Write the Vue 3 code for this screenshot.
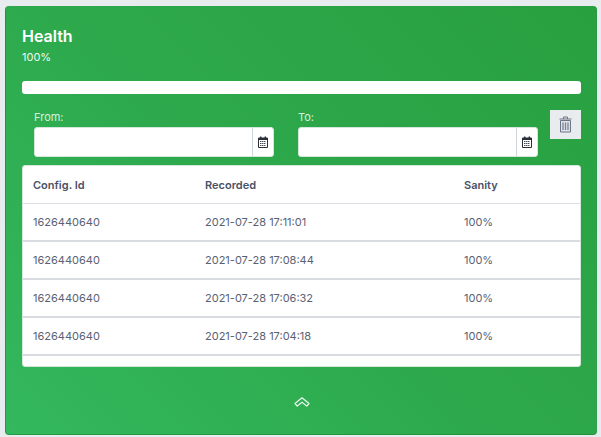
<script setup>
const rows = [
  { id: '1626440640', at: '2021-07-28 17:11:01', sanity: '100%' },
  { id: '1626440640', at: '2021-07-28 17:08:44', sanity: '100%' },
  { id: '1626440640', at: '2021-07-28 17:06:32', sanity: '100%' },
  { id: '1626440640', at: '2021-07-28 17:04:18', sanity: '100%' },
]
const fields = ['From:', 'To:']
</script>

<template>
  <div class="page">
    <section class="card">
      <h1 class="title">Health</h1>
      <div class="sub">100%</div>
      <div class="progress"></div>
      <div class="filters">
        <div v-for="f in fields" :key="f" class="field">
          <label class="label">{{ f }}</label>
          <div class="input">
            <div class="input-main"></div>
            <div class="input-addon">
              <svg width="10" height="12" viewBox="0 0 10 12">
                <path d="M0.5 2h9v9.5h-9z" fill="#fff" stroke="#2a2f3a" stroke-width="1" />
                <path d="M0.5 2h9v2h-9z" fill="#2a2f3a" />
                <path d="M2 0.5h1.4v2H2zM6.6 0.5H8v2H6.6z" fill="#2a2f3a" />
                <path d="M2 5.5h6M2 7.5h6M2 9.5h6" stroke="#4a4f5a" stroke-width="1" stroke-dasharray="1.5 .5" />
              </svg>
            </div>
          </div>
        </div>
        <button class="trash" type="button" aria-label="Delete">
          <svg width="13" height="17" viewBox="0 0 13 17">
            <path d="M0.5 3h12" stroke="#6c7587" stroke-width="1" />
            <path d="M4.5 3V1h4v2" fill="none" stroke="#6c7587" stroke-width="1" />
            <path d="M1.5 4.5h10v11.5h-10z" fill="#dfe2e8" stroke="#6c7587" stroke-width="1" />
            <path d="M4 6.5v7.5M6.5 6.5v7.5M9 6.5v7.5" stroke="#7b8496" stroke-width="1.3" />
          </svg>
        </button>
      </div>
      <div class="table-wrap">
        <div class="row head">
          <div>Config. Id</div>
          <div>Recorded</div>
          <div>Sanity</div>
        </div>
        <div v-for="r in rows" :key="r.at" class="row">
          <div>{{ r.id }}</div>
          <div>{{ r.at }}</div>
          <div>{{ r.sanity }}</div>
        </div>
      </div>
      <div class="collapse">
        <svg width="16" height="12" viewBox="0 0 16 12">
          <path d="M1 6.5L8 .8l7 5.7-2.2 2.6L8 5.2 3.2 9.1z" fill="none" stroke="#eafbef" stroke-width="1.2" stroke-linejoin="round" />
        </svg>
      </div>
    </section>
  </div>
</template>

<style>
html, body { margin: 0; background: #e9ecef; }
</style>

<style scoped>
.page {
  width: 601px;
  height: 437px;
  box-sizing: border-box;
  padding: 6px 4px 2px 5px;
  font-family: Inter, "Liberation Sans", sans-serif;
  overflow: hidden;
}
.card {
  height: 429px;
  box-sizing: border-box;
  padding: 21px 15px 0 16px;
  border-radius: 4px;
  background: linear-gradient(45deg, #33b85e 0%, #2da84b 50%, #28a040 100%);
  border: 1px solid rgba(30, 120, 60, 0.35);
  border-width: 0 1px 1px 1px;
  display: flex;
  flex-direction: column;
}
.title {
  margin: 0;
  font-size: 16px;
  line-height: 19px;
  font-weight: 600;
  color: #fff;
}
.sub {
  margin-top: 5px;
  font-size: 11px;
  line-height: 13px;
  color: #eef9f1;
}
.progress {
  margin-top: 17px;
  height: 13px;
  background: #fff;
  border-radius: 3px;
}
.filters {
  display: grid;
  grid-template-columns: 264px 264px 31px;
  margin-top: 16px;
  height: 55px;
}
.field {
  padding: 0 12px;
  display: flex;
  flex-direction: column;
}
.label {
  font-size: 11px;
  line-height: 13px;
  margin-top: 1px;
  color: #d9f0df;
}
.input {
  margin-top: 3px;
  height: 30px;
  box-sizing: border-box;
  display: flex;
  background: #fff;
  border: 1px solid #d5e6da;
  border-radius: 3px;
}
.input-main { flex: 1; }
.input-addon {
  width: 20px;
  border-left: 1px solid #ced4da;
  display: flex;
  align-items: center;
  justify-content: center;
}
.trash {
  width: 31px;
  height: 29px;
  padding: 0;
  border: 0;
  background: #e9ecef;
  display: flex;
  align-items: center;
  justify-content: center;
}
.table-wrap {
  height: 202px;
  box-sizing: border-box;
  background: #fff;
  border: 1px solid #d5e6da;
  border-radius: 3px;
  overflow: hidden;
}
.row {
  display: grid;
  grid-template-columns: 172px 259px 1fr;
  align-items: center;
  height: 38px;
  box-sizing: border-box;
  padding-left: 10px;
  font-size: 11px;
  color: #5a6172;
  border-bottom: 2px solid #d8dce2;
}
.head {
  height: 38px;
  font-weight: 600;
  color: #4a5266;
  border-bottom: 1px solid #dcdfe4;
}
.collapse {
  display: flex;
  justify-content: center;
  margin-top: 30px;
}
</style>
